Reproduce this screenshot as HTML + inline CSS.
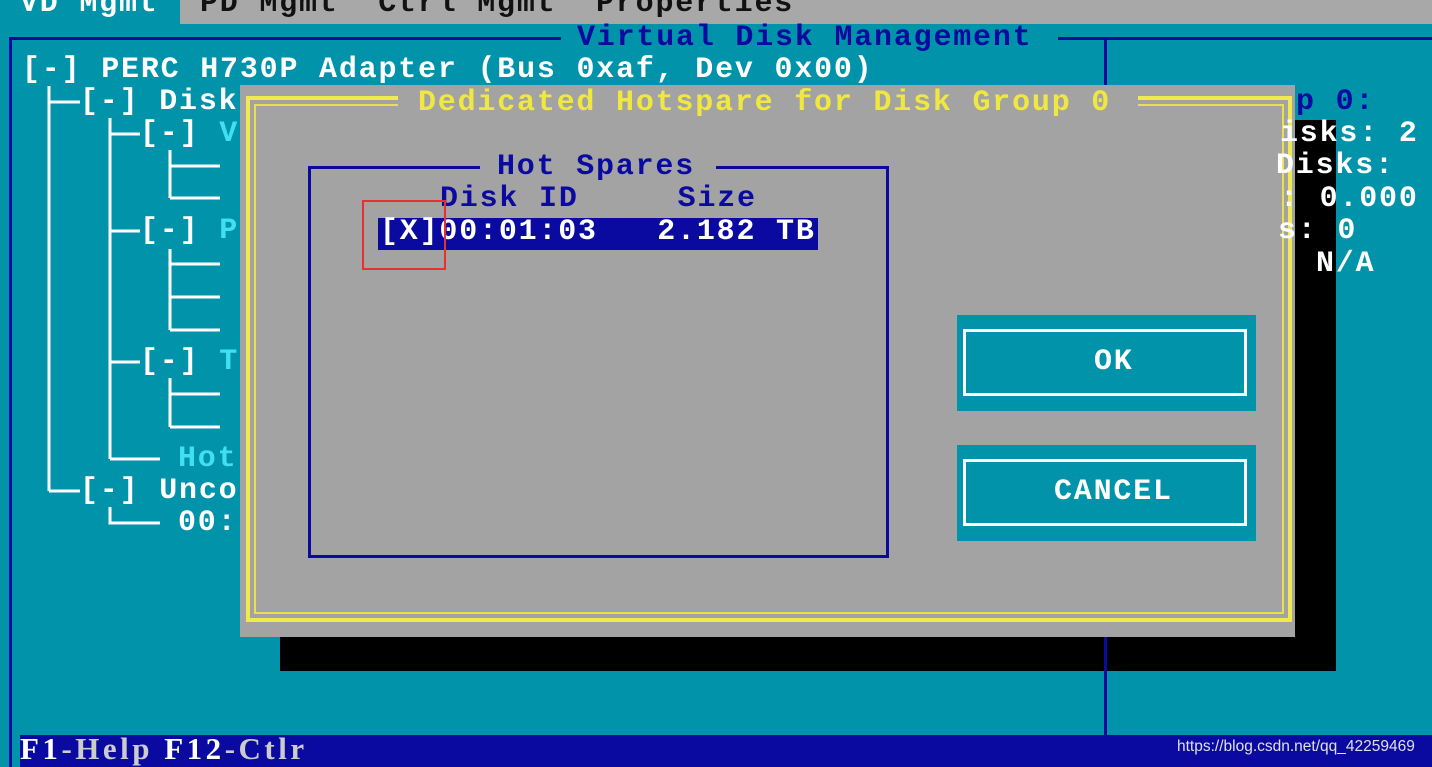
<!DOCTYPE html>
<html><head><meta charset="utf-8"><style>
*{margin:0;padding:0;box-sizing:border-box}
body{width:1432px;height:767px;overflow:hidden;background:#0093aa;position:relative;font-family:"Liberation Mono",monospace;font-weight:bold}
.a{position:absolute}
.t{position:absolute;font-size:30px;letter-spacing:1.8px;line-height:32px;white-space:pre;color:#fff}
.bl{background:#0a0aa0}
</style></head><body>
<!-- menu bar -->
<div class="a" style="left:0;top:0;width:1432px;height:24px;background:#a8a8a8"></div>
<div class="a" style="left:0;top:0;width:180px;height:24px;background:#0093aa"></div>
<div class="t" style="left:20px;top:-12px">VD Mgmt</div>
<div class="t" style="left:200px;top:-12px;color:#111">PD Mgmt  Ctrl Mgmt  Properties</div>
<!-- frame lines -->
<div class="a bl" style="left:9px;top:37px;width:3px;height:730px"></div>
<div class="a bl" style="left:9px;top:37px;width:552px;height:3px"></div>
<div class="a bl" style="left:1058px;top:37px;width:374px;height:3px"></div>
<div class="a bl" style="left:1104px;top:37px;width:3px;height:700px"></div>
<div class="t" style="left:577px;top:22px;color:#0a0aa0">Virtual Disk Management</div>
<!-- tree -->
<div class="t" style="left:22px;top:54px">[-] PERC H730P Adapter (Bus 0xaf, Dev 0x00)</div>
<svg class="a" style="left:0;top:0" width="300" height="560">
<g stroke="#fff" stroke-width="3" fill="none">
<path d="M49 86V491M49 102H80M49 491H80"/>
<path d="M110 118V459M110 134H140M110 231H140M110 362H140M110 459H160"/>
<path d="M170 150V198M170 166H220M170 198H220"/>
<path d="M170 249V330M170 264H220M170 297H220M170 330H220"/>
<path d="M170 378V427M170 394H220M170 427H220"/>
<path d="M110 507V523H160"/>
</g></svg>
<div class="t" style="left:80px;top:86px">[-] Disk</div>
<div class="t" style="left:140px;top:118px">[-] <span style="color:#40e0f0">V</span></div>
<div class="t" style="left:140px;top:215px">[-] <span style="color:#40e0f0">P</span></div>
<div class="t" style="left:140px;top:346px">[-] <span style="color:#40e0f0">T</span></div>
<div class="t" style="left:178px;top:443px;color:#40e0f0">Hot</div>
<div class="t" style="left:80px;top:475px">[-] Unco</div>
<div class="t" style="left:178px;top:507px">00:</div>
<!-- shadow -->
<div class="a" style="left:1295px;top:120px;width:41px;height:551px;background:#000"></div>
<div class="a" style="left:280px;top:637px;width:1056px;height:34px;background:#000"></div>
<div class="a bl" style="left:1104px;top:637px;width:3px;height:34px"></div>
<!-- dialog -->
<div class="a" style="left:240px;top:85px;width:1055px;height:552px;background:#a3a3a3"></div>
<div class="a" style="left:246px;top:96px;width:1046px;height:526px;border:4px solid #f0ea50"></div>
<div class="a" style="left:254px;top:104px;width:1030px;height:510px;border:2px solid #e8e050"></div>
<div class="a" style="left:398px;top:90px;width:740px;height:26px;background:#a3a3a3"></div>
<div class="t" style="left:418px;top:87px;color:#f0e840">Dedicated Hotspare for Disk Group 0</div>
<!-- right panel text -->
<div class="t" style="left:1296px;top:86px;color:#0a0aa0">p 0:</div>
<div class="t" style="left:1280px;top:118px">isks: 2</div>
<div class="t" style="left:1276px;top:150px">Disks:</div>
<div class="t" style="left:1280px;top:183px">: 0.000</div>
<div class="t" style="left:1278px;top:215px">s: 0</div>
<div class="t" style="left:1316px;top:248px">N/A</div>
<!-- hot spares box -->
<div class="a" style="left:308px;top:166px;width:581px;height:392px;border:3px solid #0a0aa0"></div>
<div class="a" style="left:480px;top:160px;width:236px;height:14px;background:#a3a3a3"></div>
<div class="t" style="left:497px;top:151px;color:#0a0aa0">Hot Spares</div>
<div class="t" style="left:440px;top:183px;color:#0a0aa0">Disk ID     Size</div>
<div class="a" style="left:378px;top:218px;width:440px;height:32px;background:#0a0aa0"></div>
<div class="t" style="left:380px;top:216px">[X]00:01:03   2.182 TB</div>
<div class="a" style="left:362px;top:200px;width:84px;height:70px;border:2px solid #e83030"></div>
<!-- buttons -->
<div class="a" style="left:957px;top:315px;width:299px;height:96px;background:#0093aa"></div>
<div class="a" style="left:963px;top:329px;width:284px;height:67px;border:3px solid #fff"></div>
<div class="t" style="left:1094px;top:346px">OK</div>
<div class="a" style="left:957px;top:445px;width:299px;height:96px;background:#0093aa"></div>
<div class="a" style="left:963px;top:459px;width:284px;height:67px;border:3px solid #fff"></div>
<div class="t" style="left:1054px;top:476px">CANCEL</div>
<!-- footer -->
<div class="a" style="left:20px;top:735px;width:1412px;height:32px;background:#0a0aa0"></div>
<div class="a" style="left:20px;top:731px;font-family:'Liberation Serif',serif;font-size:31px;color:#fff;letter-spacing:3.5px;white-space:pre">F1<span style="color:#ccc">-Help</span> F12<span style="color:#ccc">-Ctlr</span></div>
<div class="a" style="left:1177px;top:738px;font-family:'Liberation Sans',sans-serif;font-weight:normal;font-size:15.5px;color:#e0e0e0">https://blog.csdn.net/qq_42259469</div>
</body></html>
